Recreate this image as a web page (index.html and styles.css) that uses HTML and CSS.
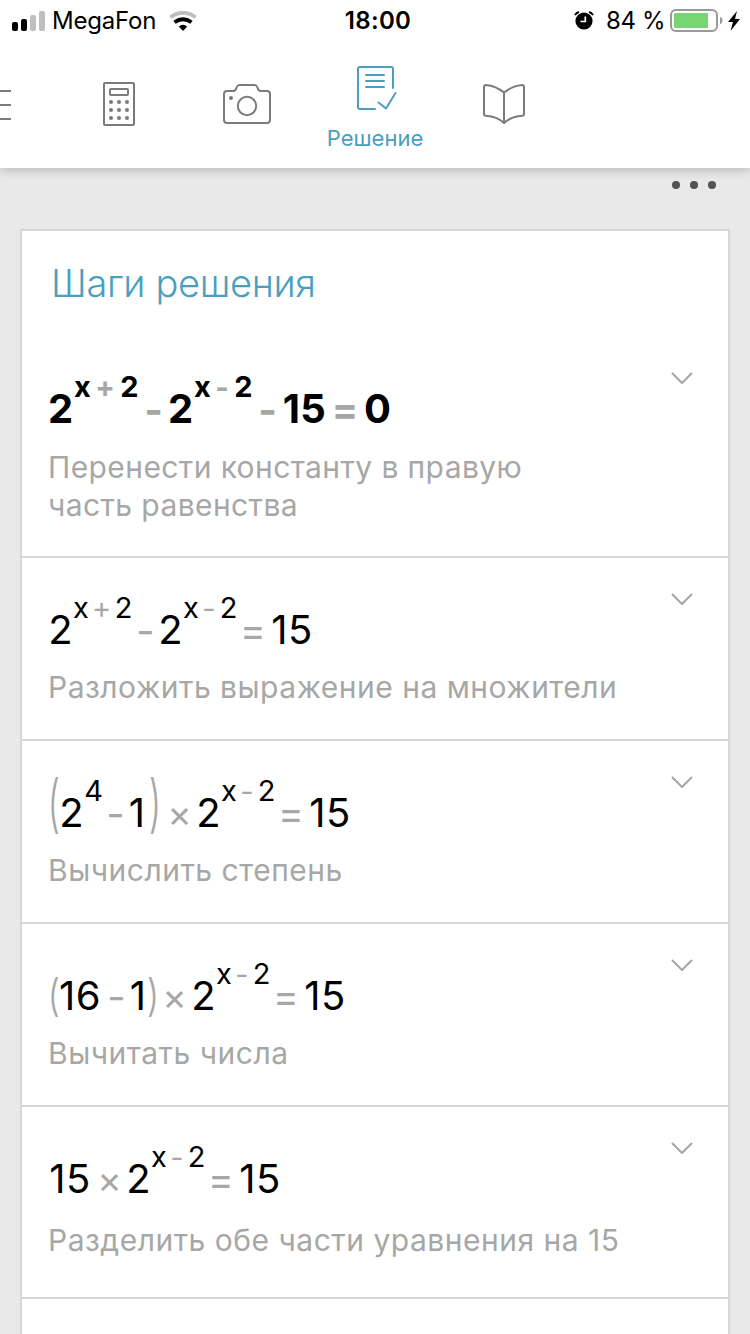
FILE: index.html
```html
<!DOCTYPE html>
<html lang="ru">
<head>
<meta charset="utf-8">
<title>Шаги решения</title>
<link rel="stylesheet" href="styles.css">
</head>
<body>
<header class="header">
  <div class="status">
    <div class="status-left">
      <svg class="signal" width="33" height="20" viewBox="0 0 33 20"><rect y="11" width="6" height="9" rx="2"/><rect x="9" y="8" width="6" height="12" rx="2"/><g fill="#bebebe"><rect x="18" y="4" width="6" height="16" rx="2"/><rect x="27" width="6" height="20" rx="2"/></g></svg>
      <span class="carrier">MegaFon</span>
      <svg class="wifi" width="28" height="20" viewBox="0 0 28 20"><g fill="none" stroke-width="3.800"><path d="M1.300 6.200Q14-2.800 26.700 6.200" stroke="#bebebe"/><path d="M5.500 11.300Q14 5.200 22.500 11.300" stroke="#000"/></g><path d="M9.800 15.500Q14 12.200 18.200 15.500L14 20z"/></svg>
    </div>
    <span class="clock">18:00</span>
    <div class="status-right">
      <svg class="alarm" width="20" height="19" viewBox="0 0 20 19"><circle cx="10" cy="10" r="8.6"/><path d="M1 4.2Q2.2 1.6 5 1M19 4.2Q17.800 1.600 15 1" fill="none" stroke="#000" stroke-width="1.800"/><path d="M11.300 5.500V10.500H6.500" fill="none" stroke="#fff" stroke-width="1.700"/></svg>
      <span class="percent">84 %</span>
      <svg class="battery" width="53" height="23" viewBox="0 0 53 23"><rect x="1" y="1" width="46" height="21" rx="5" fill="none" stroke="#999" stroke-width="2"/><rect x="4" y="4" width="34" height="15" rx="1" fill="#77d672"/><path d="M50 7.500Q55 11.500 50 15.500z" fill="#999"/></svg>
      <svg class="bolt" width="12" height="20" viewBox="0 0 12 20"><path d="M9 0L0 11H5L2.500 20L12 8H7z"/></svg>
    </div>
  </div>
  <nav class="tabs">
    <div class="tab tab-menu"><svg width="11" height="32" viewBox="0 0 11 32"><path d="M0 2H11M0 16H11M0 30H11"/></svg></div>
    <div class="tab tab-calc"><svg width="32" height="44" viewBox="0 0 32 44"><rect x="1" y="1" width="30" height="42" rx="1"/><rect x="7" y="7" width="18" height="6" rx="1"/><g fill="#7b7b7b" stroke="none"><circle cx="8" cy="20" r="2"/><circle cx="16" cy="20" r="2"/><circle cx="24" cy="20" r="2"/><circle cx="8" cy="28" r="2"/><circle cx="16" cy="28" r="2"/><circle cx="24" cy="28" r="2"/><circle cx="8" cy="36" r="2"/><circle cx="16" cy="36" r="2"/><circle cx="24" cy="36" r="2"/></g></svg></div>
    <div class="tab tab-camera"><svg width="48" height="40" viewBox="0 0 48 40"><path d="M4 7H10Q12.500 7 13.200 4.500L13.800 3Q14.500 1 16.500 1H31.500Q33.500 1 34.200 3L34.800 4.500Q35.500 7 38 7H44Q47 7 47 10V36Q47 39 44 39H4Q1 39 1 36V10Q1 7 4 7Z"/><circle cx="24" cy="22" r="9.200"/><circle cx="8" cy="14" r="2" fill="#7b7b7b" stroke="none"/></svg></div>
    <div class="tab tab-solution"><svg width="40" height="44" viewBox="0 0 40 44"><path d="M18 43H3Q1 43 1 41V3Q1 1 3 1H34Q36 1 36 3V22M9 9H27M9 15H27M9 21H27M21.500 36.500L29 42.500L38.500 27"/></svg><span class="tab-label">Решение</span></div>
    <div class="tab tab-book"><svg width="42" height="40" viewBox="0 0 42 40"><path d="M21 8.500Q13 2 3 1Q1 1 1 3V30Q1 31.500 3 31.800Q14 32.500 21 39Q28 32.500 39 31.800Q41 31.500 41 30V3Q41 1 39 1Q29 2 21 8.500V39"/></svg></div>
  </nav>
</header>
<main class="content">
  <div class="more"><i></i><i></i><i></i></div>
  <section class="card">
    <h1 class="title">Шаги решения</h1>
    <article class="step step-first">
      <div class="body">
        <div class="eq bold"><b class="d">2</b><span class="sup"><b class="x">x</b><i class="plus">+</i><b class="e">2</b></span><i class="minus">-</i><b class="d">2</b><span class="sup"><b class="x">x</b><i class="minus">-</i><b class="e">2</b></span><i class="minus">-</i><b class="dd">15</b><i class="equals">=</i><b class="zero">0</b></div>
        <p class="hint">Перенести константу в правую часть равенства</p>
      </div>
      <svg class="chevron" width="22" height="12" viewBox="0 0 22 12"><path d="M1 1L11 11L21 1"/></svg>
    </article>
    <article class="step">
      <div class="body">
        <div class="eq"><b class="d">2</b><span class="sup"><b class="x">x</b><i class="plus">+</i><b class="e">2</b></span><i class="minus">-</i><b class="d">2</b><span class="sup"><b class="x">x</b><i class="minus">-</i><b class="e">2</b></span><i class="equals">=</i><b class="dd">15</b></div>
        <p class="hint">Разложить выражение на множители</p>
      </div>
      <svg class="chevron" width="22" height="12" viewBox="0 0 22 12"><path d="M1 1L11 11L21 1"/></svg>
    </article>
    <article class="step">
      <div class="body">
        <div class="eq"><i class="paren open tall">(</i><b class="d">2</b><span class="sup"><b class="e">4</b></span><i class="minus">-</i><b class="one">1</b><i class="paren close tall">)</i><i class="times">×</i><b class="d">2</b><span class="sup"><b class="x">x</b><i class="minus">-</i><b class="e">2</b></span><i class="equals">=</i><b class="dd">15</b></div>
        <p class="hint">Вычислить степень</p>
      </div>
      <svg class="chevron" width="22" height="12" viewBox="0 0 22 12"><path d="M1 1L11 11L21 1"/></svg>
    </article>
    <article class="step">
      <div class="body">
        <div class="eq"><i class="paren open">(</i><b class="dd">16</b><i class="minus">-</i><b class="one">1</b><i class="paren close">)</i><i class="times">×</i><b class="d">2</b><span class="sup"><b class="x">x</b><i class="minus">-</i><b class="e">2</b></span><i class="equals">=</i><b class="dd">15</b></div>
        <p class="hint">Вычитать числа</p>
      </div>
      <svg class="chevron" width="22" height="12" viewBox="0 0 22 12"><path d="M1 1L11 11L21 1"/></svg>
    </article>
    <article class="step step-last">
      <div class="body">
        <div class="eq"><b class="dd lead">15</b><i class="times">×</i><b class="d">2</b><span class="sup"><b class="x">x</b><i class="minus">-</i><b class="e">2</b></span><i class="equals">=</i><b class="dd">15</b></div>
        <p class="hint">Разделить обе части уравнения на 15</p>
      </div>
      <svg class="chevron" width="22" height="12" viewBox="0 0 22 12"><path d="M1 1L11 11L21 1"/></svg>
    </article>
  </section>
</main>
</body>
</html>
```
FILE: styles.css
```css
* { box-sizing: border-box; }
body {
  margin: 0;
  width: 750px;
  height: 1334px;
  overflow: hidden;
  display: flex;
  flex-direction: column;
  background: #e9e9e9;
  font-family: Inter, "Noto Sans", sans-serif;
  color: #000;
}
svg { display: block; flex: none; }
b, i { font-weight: inherit; font-style: normal; }

.header {
  position: relative;
  flex: none;
  height: 168px;
  background: #fff;
  box-shadow: 0 2px 10px rgba(0, 0, 0, .22);
}

/* Status bar */
.status {
  display: grid;
  grid-template-columns: 1fr auto 1fr;
  align-items: center;
  height: 40px;
  padding: 0 10px 0 12px;
  font-size: 24px;
  line-height: 40px;
  white-space: nowrap;
}
.status-left, .status-right { display: flex; align-items: center; }
.status-right { justify-content: flex-end; }
.carrier { width: 103px; margin: 1px 14px 0 7px; letter-spacing: -.2px; }
.clock { padding: 1px 0 0 4px; font-weight: 600; letter-spacing: .3px; }
.percent { width: 57px; margin: 1px 7px 0 12px; letter-spacing: -.4px; }
.bolt { margin-left: 5px; }

/* Tabs */
.tabs { display: flex; height: 128px; }
.tab { flex: none; width: 128px; display: flex; flex-direction: column; align-items: center; }
.tab svg { fill: none; stroke: #7b7b7b; stroke-width: 2; stroke-linecap: round; stroke-linejoin: round; }
.tab-menu { width: 55px; align-items: flex-start; padding-top: 49px; }
.tab-calc { padding-top: 42px; }
.tab-camera, .tab-book { padding-top: 44px; }
.tab-book { padding-left: 2px; }
.tab-solution { padding-top: 26px; }
.tab-solution svg { stroke: #4a9fc0; margin-left: 3px; }
.tab-label { margin-top: 14px; font-size: 22px; line-height: 28px; color: #4a9fc0; }

/* Content */
.content { flex: 1; min-height: 0; display: flex; flex-direction: column; padding: 0 20px; }
.more { flex: none; display: flex; justify-content: flex-end; gap: 10px; height: 61px; padding: 13px 14px 0 0; }
.more i { width: 8px; height: 8px; border-radius: 50%; background: #505254; }
.card { flex: 1; background: #fff; border: 2px solid #d6d6d6; border-bottom: 0; }
.title {
  height: 106px;
  margin: 0;
  padding: 27px 0 0 29px;
  font-size: 38px;
  line-height: 50px;
  font-weight: 300;
  letter-spacing: -.35px;
  color: #4a9fc0;
}
.step {
  display: flex;
  justify-content: space-between;
  height: 183px;
  padding: 35px 35px 0 26px;
  border-bottom: 2px solid #d6d6d6;
}
.step-first { height: 221px; }
.step-last { height: 192px; }
.body { width: 590px; padding-top: 1px; }
.chevron { fill: none; stroke: #a5a5a5; stroke-width: 2; }
.hint {
  margin: 12px 0 0;
  width: 590px;
  font-size: 30px;
  line-height: 38px;
  letter-spacing: .5px;
  color: #a7a7a7;
}
.step-first .hint { width: 520px; margin-top: 13px; letter-spacing: .4px; }
.step-last .hint { margin-top: 16px; }

/* Equations: each token is centred in its own cell */
.eq { display: flex; align-items: baseline; height: 62px; font-size: 40px; line-height: 72px; }
.eq b, .eq i { flex: none; text-align: center; white-space: nowrap; }
.eq i { color: #a7a7a7; }
.sup { display: flex; align-items: baseline; font-size: 29px; transform: translateY(-26px); }
.d { width: 25px; }
.dd { width: 48px; letter-spacing: .4px; }
.one { width: 18px; }
.lead { margin: 0 1px 0 -2px; }
.x { width: 16px; }
.e { width: 19px; }
.plus { width: 25px; }
.minus { width: 25px; transform: translateY(1px); }
.sup .minus { width: 20px; }
.equals { width: 30px; font-size: 39px; }
.times { width: 31px; font-size: 37px; text-indent: -2px; }
.paren { font-weight: 300; transform: translate(-1px, -1px) scale(.9, 1.1); transform-origin: 50% 48%; }
.open { width: 8px; }
.close { width: 13px; }
.tall { transform: translate(-1px, -14px) scale(.9, 1.57); transform-origin: 50% 40%; }
.open.tall { width: 11px; }
.close.tall { width: 14px; margin: 0 2px 0 3px; }
.bold { font-weight: 700; margin-left: -1px; }
.bold .d, .bold .minus { width: 27px; }
.bold .x { width: 17px; }
.bold .plus { width: 28px; }
.bold .e { width: 21px; }
.bold .sup .minus { width: 22px; }
.bold .dd { width: 47px; }
.bold .equals { width: 34px; }
.bold .zero { width: 31px; }
```
